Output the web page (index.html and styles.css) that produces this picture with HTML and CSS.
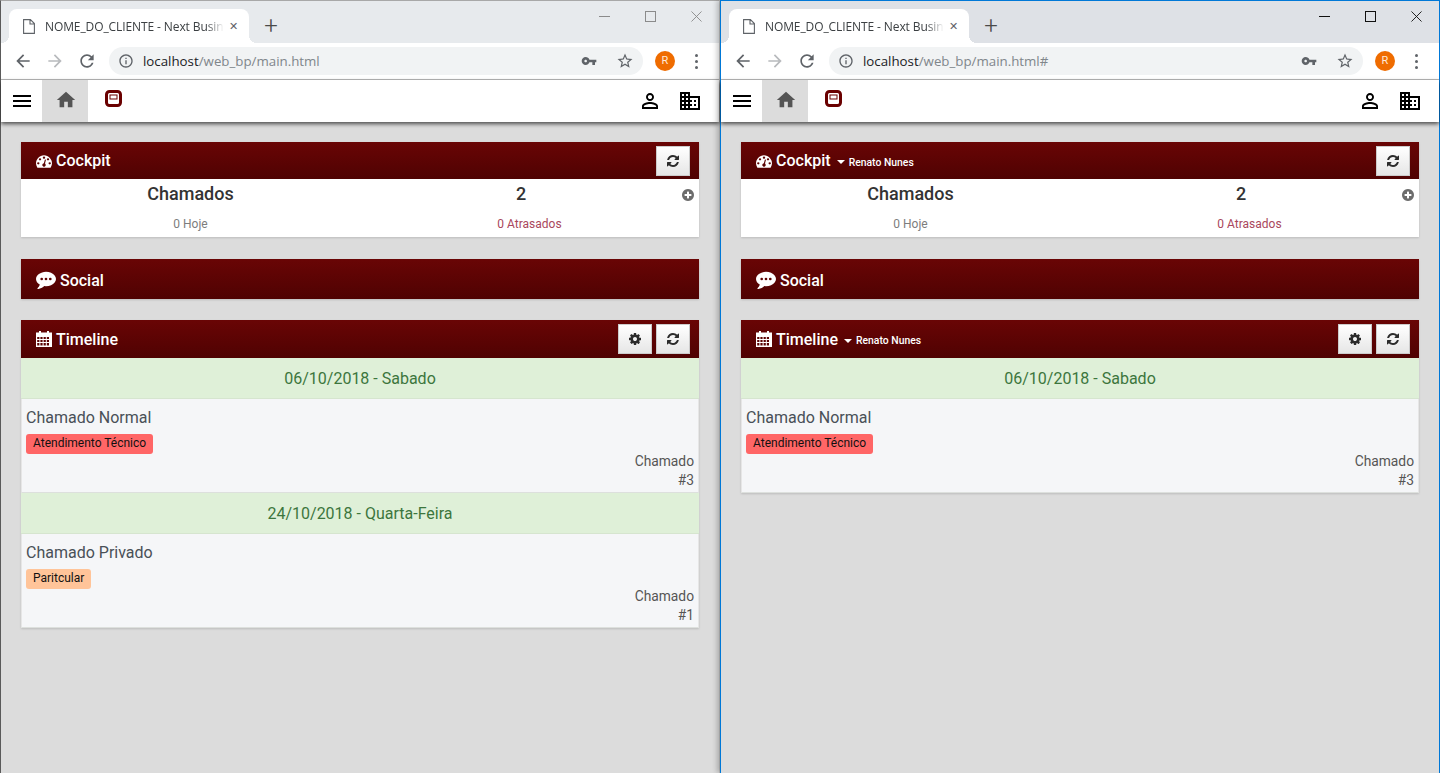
FILE: index.html
```html
<!DOCTYPE html>
<html>
<head>
	<title>NOME_DO_CLIENTE - Next Business</title>
	<link rel="stylesheet" href="styles.css">
</head>
<body>
	<!-- Icon sprite, used by both windows -->
	<svg class="sprite" xmlns="http://www.w3.org/2000/svg">
		<symbol id="i-page" viewBox="0 0 12 15"><path d="M.6.6h6.8l4 4v9.8H.6zM7 .8v4.2h4.2" fill="none" stroke="currentColor" stroke-width="1.1"/></symbol>
		<symbol id="i-back" viewBox="0 0 24 24"><path d="M20 11H7.83l5.59-5.59L12 4l-8 8 8 8 1.41-1.41L7.83 13H20v-2z"/></symbol>
		<symbol id="i-forward" viewBox="0 0 24 24"><path d="M12 4l-1.41 1.41L16.17 11H4v2h12.17l-5.58 5.59L12 20l8-8z"/></symbol>
		<symbol id="i-reload" viewBox="0 0 24 24"><path d="M17.65 6.35C16.2 4.9 14.21 4 12 4c-4.42 0-7.99 3.58-7.99 8s3.57 8 7.99 8c3.73 0 6.84-2.55 7.73-6h-2.08c-.82 2.33-3.04 4-5.65 4-3.31 0-6-2.69-6-6s2.69-6 6-6c1.66 0 3.14.69 4.22 1.78L13 11h7V4l-2.35 2.35z"/></symbol>
		<symbol id="i-info" viewBox="0 0 24 24"><path d="M11 7h2v2h-2zm0 4h2v6h-2zm1-9C6.48 2 2 6.48 2 12s4.48 10 10 10 10-4.48 10-10S17.52 2 12 2zm0 18c-4.41 0-8-3.59-8-8s3.59-8 8-8 8 3.59 8 8-3.59 8-8 8z"/></symbol>
		<symbol id="i-key" viewBox="0 0 24 24"><path d="M12.65 10C11.83 7.67 9.61 6 7 6c-3.31 0-6 2.69-6 6s2.69 6 6 6c2.61 0 4.83-1.67 5.65-4H17v4h4v-4h2v-4H12.65zM7 14c-1.1 0-2-.9-2-2s.9-2 2-2 2 .9 2 2-.9 2-2 2z"/></symbol>
		<symbol id="i-star" viewBox="0 0 24 24"><path d="M22 9.24l-7.19-.62L12 2 9.19 8.63 2 9.24l5.46 4.73L5.82 21 12 17.27 18.18 21l-1.63-7.03L22 9.24zM12 15.4l-3.76 2.27 1-4.28-3.32-2.88 4.38-.38L12 6.1l1.71 4.04 4.38.38-3.32 2.88 1 4.28L12 15.4z"/></symbol>
		<symbol id="i-menu" viewBox="0 0 24 24"><path d="M3 18h18v-2H3v2zm0-5h18v-2H3v2zm0-7v2h18V6H3z"/></symbol>
		<symbol id="i-home" viewBox="0 0 24 24"><path d="M10 20v-6h4v6h5v-8h3L12 3 2 12h3v8z"/></symbol>
		<symbol id="i-person" viewBox="0 0 24 24"><path d="M12 5.9c1.16 0 2.1.94 2.1 2.1s-.94 2.1-2.1 2.1S9.9 9.16 9.9 8s.94-2.1 2.1-2.1m0 9c2.97 0 6.1 1.46 6.1 2.1v1.1H5.9V17c0-.64 3.13-2.1 6.1-2.1M12 4C9.79 4 8 5.79 8 8s1.79 4 4 4 4-1.79 4-4-1.79-4-4-4zm0 9c-2.67 0-8 1.34-8 4v3h16v-3c0-2.66-5.33-4-8-4z"/></symbol>
		<symbol id="i-domain" viewBox="0 0 24 24"><path d="M12 7V3H2v18h20V7H12zM6 19H4v-2h2v2zm0-4H4v-2h2v2zm0-4H4V9h2v2zm0-4H4V5h2v2zm4 12H8v-2h2v2zm0-4H8v-2h2v2zm0-4H8V9h2v2zm0-4H8V5h2v2zm10 12h-8v-2h2v-2h-2v-2h2v-2h-2V9h8v10zm-2-8h-2v2h2v-2zm0 4h-2v2h2v-2z"/></symbol>
		<symbol id="i-logo" viewBox="0 0 17 17"><rect x="1.500" y="1.500" width="14" height="14" rx="3" fill="#fff" stroke="#6a0000" stroke-width="3"/><rect x="5" y="5" width="7" height="4" fill="#fff" stroke="#6a0000"/></symbol>
		<symbol id="i-dashboard" viewBox="0 0 1792 1792"><path d="M384 1152q0-53-37.5-90.5t-90.5-37.5-90.5 37.5-37.5 90.5 37.5 90.5 90.5 37.5 90.5-37.5 37.5-90.5zm192-448q0-53-37.5-90.5t-90.5-37.5-90.5 37.5-37.5 90.5 37.5 90.5 90.5 37.5 90.5-37.5 37.5-90.5zm428 481l101-382q6-26-7.5-48.5t-38.5-29.5-48 7-30 39l-101 382q-60 5-107 43.5t-63 98.5q-20 77 20 146t117 89 146-20 89-117q16-60-6-117t-72-91zm660-33q0-53-37.5-90.5t-90.5-37.5-90.5 37.5-37.5 90.5 37.5 90.5 90.5 37.5 90.5-37.5 37.5-90.5zm-640-640q0-53-37.5-90.5t-90.5-37.5-90.5 37.5-37.5 90.5 37.5 90.5 90.5 37.5 90.5-37.5 37.5-90.5zm448 192q0-53-37.5-90.5t-90.5-37.5-90.5 37.5-37.5 90.5 37.5 90.5 90.5 37.5 90.5-37.5 37.5-90.5zm320 448q0 261-141 483-19 29-54 29h-1402q-35 0-54-29-141-221-141-483 0-182 71-348t191-286 286-191 348-71 348 71 286 191 191 286 71 348z"/></symbol>
		<symbol id="i-comment" viewBox="0 0 1792 1792"><path d="M1792 896q0 174-120 321.5t-326 233-450 85.5q-70 0-145-8-198 175-460 242-49 14-114 22-17 2-30.5-9t-17.5-29v-1q-3-4-.5-12t2-10 4.5-9.5l6-9 7-8.5 8-9q7-8 31-34.5t34.5-38 31-39.5 32.5-51 27-59 26-76q-157-89-247.5-220t-90.5-281q0-130 71-248.5t191-204.5 286-136.5 348-50.5q244 0 450 85.5t326 233 120 321.5z"/><circle cx="512" cy="896" r="120" fill="#5e0303"/><circle cx="896" cy="896" r="120" fill="#5e0303"/><circle cx="1280" cy="896" r="120" fill="#5e0303"/></symbol>
		<symbol id="i-calendar" viewBox="0 0 16 16"><path fill-rule="evenodd" d="M3 0h2v1.5h6V0h2v1.5h3V16H0V1.500h3zM1.200 6v2h2.200V6zm3.200 0v2h2.200V6zm3.200 0v2h2.200V6zm3.200 0v2h2.200V6zM1.200 9v2h2.200V9zm3.200 0v2h2.200V9zm3.200 0v2h2.200V9zm3.200 0v2h2.200V9zM1.200 12v2.500h2.200V12zm3.200 0v2.500h2.200V12zm3.200 0v2.500h2.200V12zm3.200 0v2.500h2.200V12z"/></symbol>
		<symbol id="i-refresh" viewBox="0 0 1792 1792"><path d="M1639 1056q0 5-1 7-64 268-268 434.5t-478 166.5q-146 0-282.5-55t-243.5-157l-129 129q-19 19-45 19t-45-19-19-45v-448q0-26 19-45t45-19h448q26 0 45 19t19 45-19 45l-137 137q71 66 161 102t187 36q134 0 250-65t186-179q11-17 53-117 8-23 30-23h192q13 0 22.5 9.5t9.5 22.5zm25-800v448q0 26-19 45t-45 19h-448q-26 0-45-19t-19-45 19-45l138-138q-148-137-349-137-134 0-250 65t-186 179q-11 17-53 117-8 23-30 23h-199q-13 0-22.5-9.5t-9.5-22.5v-7q65-268 270-434.5t480-166.5q146 0 284 55.5t245 156.5l130-129q19-19 45-19t45 19 19 45z"/></symbol>
		<symbol id="i-cog" viewBox="0 0 1792 1792"><path d="M1152 896q0-106-75-181t-181-75-181 75-75 181 75 181 181 75 181-75 75-181zm512-109v222q0 12-8 23t-20 13l-185 28q-19 54-39 91 35 50 107 138 10 12 10 25t-9 23q-27 37-99 108t-94 71q-12 0-26-9l-138-108q-44 23-91 38-16 136-29 186-7 28-36 28h-222q-14 0-24.5-8.5t-11.5-21.5l-28-184q-49-16-90-37l-141 107q-10 9-25 9-14 0-25-11-126-114-165-168-7-10-7-23 0-12 8-23 15-21 51-66.5t54-70.5q-27-50-41-99l-183-27q-13-2-21-12.5t-8-23.5v-222q0-12 8-23t19-13l186-28q14-46 39-92-40-57-107-138-10-12-10-24 0-10 9-23 26-36 98.5-107.5t94.5-71.5q13 0 26 10l138 107q44-23 91-38 16-136 29-186 7-28 36-28h222q14 0 24.5 8.5t11.5 21.5l28 184q49 16 90 37l142-107q9-9 24-9 13 0 25 10 129 119 165 170 7 8 7 22 0 12-8 23-15 21-51 66.5t-54 70.5q26 50 41 98l183 28q13 2 21 12.5t8 23.5z"/></symbol>
		<symbol id="i-plus" viewBox="0 0 1792 1792"><path d="M1344 960v-128q0-26-19-45t-45-19h-256v-256q0-26-19-45t-45-19h-128q-26 0-45 19t-19 45v256h-256q-26 0-45 19t-19 45v128q0 26 19 45t45 19h256v256q0 26 19 45t45 19h128q26 0 45-19t19-45v-256h256q26 0 45-19t19-45zm320-64q0 209-103 385.5t-279.5 279.5-385.5 103-385.5-103-279.5-279.5-103-385.5 103-385.5 279.5-279.5 385.5-103 385.5 103 279.5 279.5 103 385.5z"/></symbol>
	</svg>

	<div class="desktop">

		<!-- Inactive window -->
		<div class="window">
			<div class="titlebar">
				<div class="tab">
					<svg class="tab-icon"><use href="#i-page"/></svg>
					<span class="tab-title">NOME_DO_CLIENTE - Next Busin</span>
					<span class="tab-close">&#x2715;</span>
				</div>
				<span class="new-tab">+</span>
				<div class="controls">
					<span class="ctl ctl-min"></span>
					<span class="ctl ctl-max"></span>
					<svg class="ctl-x" viewBox="0 0 12 12"><path d="M.5.5l11 11M11.500.5l-11 11" stroke="currentColor" fill="none"/></svg>
				</div>
			</div>
			<div class="toolbar">
				<svg class="tb-icon"><use href="#i-back"/></svg>
				<svg class="tb-icon tb-off"><use href="#i-forward"/></svg>
				<svg class="tb-icon"><use href="#i-reload"/></svg>
				<div class="omnibox">
					<svg class="omni-info"><use href="#i-info"/></svg>
					<span class="url">localhost<span class="url-path">/web_bp/main.html</span></span>
					<svg class="omni-key"><use href="#i-key"/></svg>
					<svg class="omni-star"><use href="#i-star"/></svg>
				</div>
				<span class="avatar">R</span>
				<span class="dots"><i></i><i></i><i></i></span>
			</div>
			<div class="navbar">
				<svg class="nav-menu"><use href="#i-menu"/></svg>
				<a class="nav-home" href="#"><svg><use href="#i-home"/></svg></a>
				<svg class="nav-logo"><use href="#i-logo"/></svg>
				<svg class="nav-person"><use href="#i-person"/></svg>
				<svg class="nav-domain"><use href="#i-domain"/></svg>
			</div>
			<div class="content">
				<div class="panel panel-cockpit">
					<div class="panel-head panel-head-short">
						<svg class="ico"><use href="#i-dashboard"/></svg>
						<span class="panel-title">Cockpit</span>
						<button class="btn"><svg><use href="#i-refresh"/></svg></button>
					</div>
					<div class="cockpit">
						<div class="stat-title">Chamados</div>
						<div class="stat-title">2</div>
						<svg class="stat-plus"><use href="#i-plus"/></svg>
						<div class="stat-sub">0 Hoje</div>
						<div class="stat-sub stat-late">0 Atrasados</div>
					</div>
				</div>
				<div class="panel">
					<div class="panel-head panel-head-tall">
						<svg class="ico ico-comment"><use href="#i-comment"/></svg>
						<span class="panel-title">Social</span>
					</div>
				</div>
				<div class="panel">
					<div class="panel-head">
						<svg class="ico"><use href="#i-calendar"/></svg>
						<span class="panel-title">Timeline</span>
						<button class="btn"><svg><use href="#i-cog"/></svg></button>
						<button class="btn"><svg><use href="#i-refresh"/></svg></button>
					</div>
					<div class="day">06/10/2018 - Sabado</div>
					<div class="item">
						<div class="item-title">Chamado Normal</div>
						<span class="tag tag-red">Atendimento Técnico</span>
						<div class="item-meta">Chamado<br>#3</div>
					</div>
					<div class="day">24/10/2018 - Quarta-Feira</div>
					<div class="item">
						<div class="item-title">Chamado Privado</div>
						<span class="tag tag-orange">Paritcular</span>
						<div class="item-meta">Chamado<br>#1</div>
					</div>
				</div>
			</div>
		</div>

		<!-- Active window -->
		<div class="window window-active">
			<div class="titlebar">
				<div class="tab">
					<svg class="tab-icon"><use href="#i-page"/></svg>
					<span class="tab-title">NOME_DO_CLIENTE - Next Busin</span>
					<span class="tab-close">&#x2715;</span>
				</div>
				<span class="new-tab">+</span>
				<div class="controls">
					<span class="ctl ctl-min"></span>
					<span class="ctl ctl-max"></span>
					<svg class="ctl-x" viewBox="0 0 12 12"><path d="M.5.5l11 11M11.500.5l-11 11" stroke="currentColor" fill="none"/></svg>
				</div>
			</div>
			<div class="toolbar">
				<svg class="tb-icon"><use href="#i-back"/></svg>
				<svg class="tb-icon tb-off"><use href="#i-forward"/></svg>
				<svg class="tb-icon"><use href="#i-reload"/></svg>
				<div class="omnibox">
					<svg class="omni-info"><use href="#i-info"/></svg>
					<span class="url">localhost<span class="url-path">/web_bp/main.html#</span></span>
					<svg class="omni-key"><use href="#i-key"/></svg>
					<svg class="omni-star"><use href="#i-star"/></svg>
				</div>
				<span class="avatar">R</span>
				<span class="dots"><i></i><i></i><i></i></span>
			</div>
			<div class="navbar">
				<svg class="nav-menu"><use href="#i-menu"/></svg>
				<a class="nav-home" href="#"><svg><use href="#i-home"/></svg></a>
				<svg class="nav-logo"><use href="#i-logo"/></svg>
				<svg class="nav-person"><use href="#i-person"/></svg>
				<svg class="nav-domain"><use href="#i-domain"/></svg>
			</div>
			<div class="content">
				<div class="panel panel-cockpit">
					<div class="panel-head panel-head-short">
						<svg class="ico"><use href="#i-dashboard"/></svg>
						<span class="panel-title">Cockpit</span>
						<span class="caret"></span>
						<span class="panel-user">Renato Nunes</span>
						<button class="btn"><svg><use href="#i-refresh"/></svg></button>
					</div>
					<div class="cockpit">
						<div class="stat-title">Chamados</div>
						<div class="stat-title">2</div>
						<svg class="stat-plus"><use href="#i-plus"/></svg>
						<div class="stat-sub">0 Hoje</div>
						<div class="stat-sub stat-late">0 Atrasados</div>
					</div>
				</div>
				<div class="panel">
					<div class="panel-head panel-head-tall">
						<svg class="ico ico-comment"><use href="#i-comment"/></svg>
						<span class="panel-title">Social</span>
					</div>
				</div>
				<div class="panel">
					<div class="panel-head">
						<svg class="ico"><use href="#i-calendar"/></svg>
						<span class="panel-title">Timeline</span>
						<span class="caret"></span>
						<span class="panel-user">Renato Nunes</span>
						<button class="btn"><svg><use href="#i-cog"/></svg></button>
						<button class="btn"><svg><use href="#i-refresh"/></svg></button>
					</div>
					<div class="day">06/10/2018 - Sabado</div>
					<div class="item">
						<div class="item-title">Chamado Normal</div>
						<span class="tag tag-red">Atendimento Técnico</span>
						<div class="item-meta">Chamado<br>#3</div>
					</div>
				</div>
			</div>
		</div>

	</div>
</body>
</html>
```

FILE: styles.css
```css
html, body { margin: 0; height: 100%; overflow: hidden; }
body { font-family: Roboto, "Liberation Sans", sans-serif; background: #dcdcdc; color: #333; }
.sprite { display: none; }
svg { fill: currentColor; display: block; }

.desktop { display: flex; height: 773px; }
.window { width: 720px; box-sizing: border-box; display: flex; flex-direction: column; border-left: 1px solid #5a5a5a; border-top: 1px solid #a8a8a8; border-right: 1px solid #c4c4c4; }
.window-active { position: relative; border-color: #0078d7; box-shadow: -3px 0 5px rgba(0, 0, 0, 0.22); }

/* Browser title bar */
.titlebar { height: 42px; flex: none; display: flex; align-items: flex-end; background: #e7eaed; padding-left: 8px; }
.window-active .titlebar { background: #dee1e6; }
.tab { position: relative; width: 240px; height: 34px; box-sizing: border-box; background: #fff; border-radius: 8px 8px 0 0; display: flex; align-items: center; padding: 0 10px 0 14px; color: #3c4043; }
.tab::before, .tab::after { content: ""; position: absolute; bottom: 0; width: 8px; height: 8px; }
.tab::before { left: -8px; background: radial-gradient(circle at 0 0, transparent 8px, #fff 8px); }
.tab::after { right: -8px; background: radial-gradient(circle at 100% 0, transparent 8px, #fff 8px); }
.tab-icon { width: 12px; height: 15px; flex: none; color: #5f6368; }
.tab-title { margin-left: 10px; font-size: 12px; letter-spacing: -0.1px; font-family: "Open Sans", sans-serif; white-space: nowrap; -webkit-mask-image: linear-gradient(to right, #000 90%, transparent); mask-image: linear-gradient(to right, #000 90%, transparent); }
.tab-close { width: 12px; margin-left: auto; font-size: 11px; color: #5f6368; text-align: center; }
.new-tab { width: 20px; margin-left: 12px; align-self: flex-start; margin-top: 11px; font: 300 24px/28px Roboto, sans-serif; text-align: center; color: #4a4a4a; }
.controls { margin-left: auto; align-self: flex-start; height: 30px; display: flex; align-items: center; gap: 35px; padding-right: 17px; color: #8b8b8b; }
.window-active .controls { color: #111; }
.ctl { width: 11px; height: 11px; box-sizing: border-box; }
.ctl-min { border-bottom: 1px solid currentColor; height: 6px; margin-bottom: 5px; }
.ctl-max { border: 1px solid currentColor; }
.ctl-x { width: 11px; height: 11px; }

/* Browser toolbar */
.toolbar { height: 36px; flex: none; display: flex; align-items: center; background: #fff; border-bottom: 1px solid #b9b9b9; color: #5f6368; }
.tb-icon { width: 20px; height: 20px; margin-left: 12px; }
.tb-off { color: #b8babd; }
.omnibox { width: 534px; height: 28px; margin-left: 12px; display: flex; align-items: center; background: #f1f3f4; border-radius: 14px; }
.omni-info { width: 16px; height: 16px; margin-left: 9px; flex: none; }
.url { margin-left: 9px; font: 13.3px/20px "Open Sans", sans-serif; color: #202124; white-space: nowrap; }
.url-path { color: #80868b; }
.omni-key { width: 16px; height: 16px; margin-left: auto; }
.omni-star { width: 18px; height: 18px; margin: 0 9px 0 19px; }
.avatar { width: 20px; height: 20px; margin-left: 12px; border-radius: 50%; background: #ef6c00; color: #ffe9d6; font-size: 11px; line-height: 20px; text-align: center; }
.dots { margin-left: 20px; display: flex; flex-direction: column; gap: 3px; }
.dots i { width: 3px; height: 3px; border-radius: 50%; background: #5f6368; }

/* App navbar */
.navbar { position: relative; height: 42px; flex: none; display: flex; align-items: center; background: #fff; box-shadow: 0 2px 4px rgba(0, 0, 0, 0.65); color: #000; }
.nav-menu { width: 24px; height: 24px; margin-left: 9px; }
.nav-home { width: 46px; height: 42px; margin-left: 8px; display: flex; align-items: center; justify-content: center; background: #dcdcdc; color: #555; }
.nav-home svg { width: 22px; height: 22px; margin: 0 0 2px 1px; }
.nav-logo { width: 17px; height: 17px; margin: 0 0 6px 17px; }
.nav-person { width: 24px; height: 24px; margin-left: auto; }
.nav-domain { width: 24px; height: 24px; margin: 0 17px 0 16px; }

/* Page */
.content { flex: 1; padding: 20px 20px 0; display: flex; flex-direction: column; gap: 21px; }
.panel { background: #fff; box-shadow: 0 1px 2px rgba(0, 0, 0, 0.15); }
.panel-cockpit { margin-bottom: 1px; }
.panel-head { height: 38px; box-sizing: border-box; display: flex; align-items: center; padding: 0 9px 0 15px; gap: 4px; color: #fff; background: linear-gradient(to bottom, #690505, #4f0202); }
.panel-head-short { height: 37px; }
.panel-head-short .btn { margin-top: 1px; }
.panel-head-tall { height: 40px; padding-bottom: 0; }
.panel-title { font-size: 16px; font-weight: 500; }
.panel-head-tall .panel-title { padding-top: 2px; }
.ico { width: 16px; height: 16px; flex: none; }
.ico-comment { width: 20px; height: 20px; }
.caret { width: 0; height: 0; margin: 3px 0 0 2px; border: 4px solid transparent; border-top-color: #fff; border-bottom: 0; }
.panel-user { font-size: 10.4px; font-weight: 500; margin: 3px 0 0 0; }
.btn { width: 34px; height: 30px; padding: 0; display: flex; align-items: center; justify-content: center; border: 1px solid #ccc; background: linear-gradient(to bottom, #fff, #e6e6e6); color: #2b2b2b; }
.btn svg { width: 14px; height: 14px; }
.panel-head .btn:first-of-type { margin-left: auto; }

.cockpit { height: 58px; box-sizing: border-box; display: grid; grid-template-columns: 339px 1fr 17px; grid-template-rows: 26px 1fr; padding-top: 2px; text-align: center; }
.stat-title { font-size: 18px; font-weight: 500; line-height: 26px; color: #333; }
.stat-plus { width: 14px; height: 14px; margin: 7px 0 0 -1px; color: #6c6c6c; }
.stat-sub { padding-top: 4px; font-size: 12px; line-height: 26px; color: #7d7d7d; }
.stat-late { grid-column: 2 / span 2; color: #a9475c; }

.day { height: 41px; box-sizing: border-box; padding-top: 1px; font-size: 16px; line-height: 40px; text-align: center; color: #3c763d; background: #dff0d8; border-bottom: 1px solid #d6e5cf; }
.item { height: 94px; box-sizing: border-box; padding: 9px 4px 0; background: #f5f6f8; border-left: 1px solid #e6e6e6; border-right: 1px solid #e6e6e6; border-bottom: 1px solid #dde0dd; }
.item-title { font-size: 16px; line-height: 20px; color: #495057; }
.tag { display: inline-block; height: 20px; margin-top: 6px; padding: 0 7px; border-radius: 3px; font-size: 12px; line-height: 18px; color: #111; }
.tag-red { background: #ff6666; }
.tag-orange { background: #ffc499; }
.item-meta { margin-top: -2px; font-size: 13.8px; line-height: 19px; text-align: right; color: #555; }
```
